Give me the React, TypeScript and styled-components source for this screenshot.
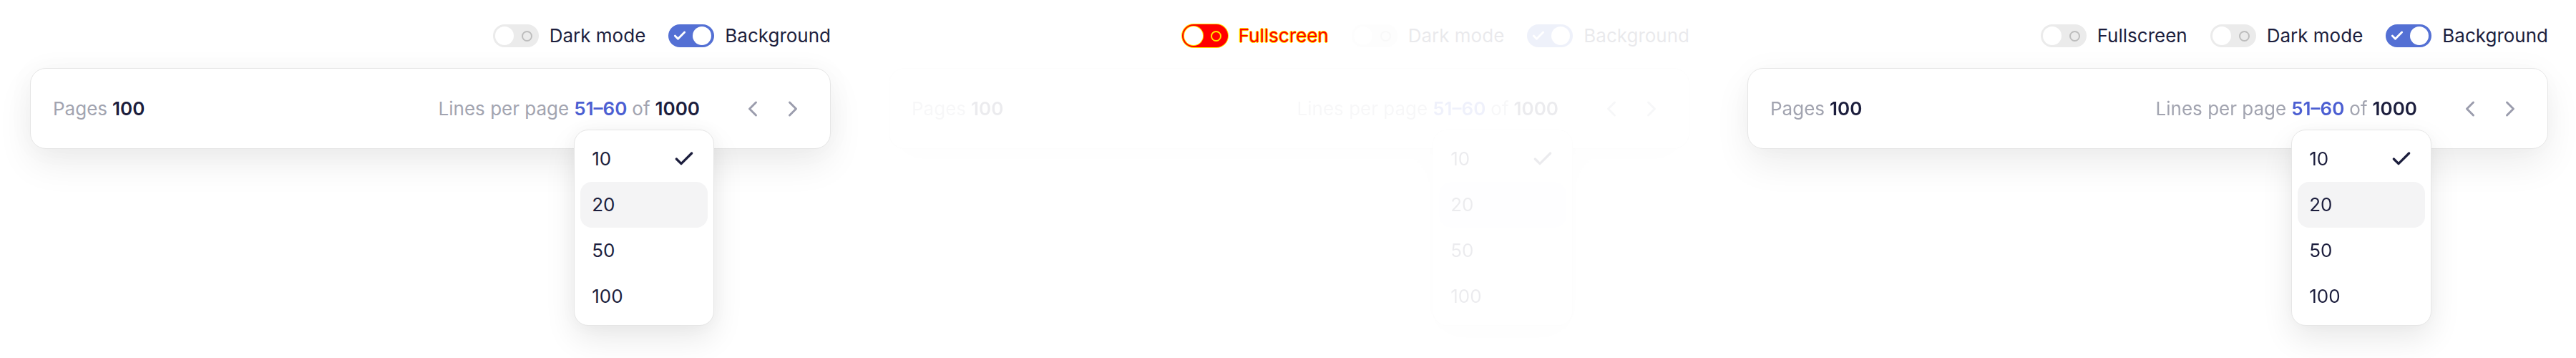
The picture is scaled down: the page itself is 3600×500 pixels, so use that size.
import React from "react";
import styled, { createGlobalStyle, css } from "styled-components";
import { Check, ChevronLeft, ChevronRight } from "lucide-react";

const GlobalStyle = createGlobalStyle`
  html, body { margin: 0; padding: 0; background: #ffffff; }
  body { font-family: Inter, "Noto Sans", sans-serif; -webkit-font-smoothing: antialiased; }
`;

const NAVY = "#1c1e3d";
const GRAY = "#a2a4b0";
const BLUE = "#4c5fd2";

const Row = styled.div`
  display: flex;
  width: 3600px;
  height: 500px;
  overflow: hidden;
`;

const Panel = styled.section`
  width: 1200px;
  flex: 0 0 1200px;
  box-sizing: border-box;
  padding: 34px 39px 0 42px;
  display: flex;
  flex-direction: column;
`;

const dim = css<{ $dim?: boolean }>`
  ${(p) => p.$dim && "opacity: 0.09;"}
`;

const ToggleBar = styled.div`
  display: flex;
  justify-content: flex-end;
  align-items: center;
  gap: 32px;
  height: 32px;
`;

const ToggleItem = styled.label<{ $dim?: boolean }>`
  display: flex;
  align-items: center;
  gap: 15px;
  ${dim}
`;

const Track = styled.span<{ $on?: boolean; $alert?: boolean }>`
  box-sizing: border-box;
  width: 64px;
  height: 32px;
  border-radius: 16px;
  display: flex;
  align-items: center;
  justify-content: space-between;
  padding: 0 4px 0 3px;
  flex-direction: ${(p) => (p.$on ? "row-reverse" : "row")};
  background: ${(p) => (p.$alert ? "#ff0000" : p.$on ? "#5470d4" : "#ebebeb")};
  ${(p) => p.$alert && "box-shadow: 0 0 0 1px #ffe600;"}
`;

const Knob = styled.span<{ $alert?: boolean }>`
  width: 26px;
  height: 26px;
  border-radius: 50%;
  background: #ffffff;
  ${(p) => p.$alert && "box-shadow: 0 0 0 1px #ffe600;"}
`;

const Ring = styled.span<{ $alert?: boolean }>`
  box-sizing: border-box;
  width: 15px;
  height: 15px;
  margin-right: 5px;
  border-radius: 50%;
  border: 2px solid ${(p) => (p.$alert ? "#ffe600" : "#bdbdbd")};
`;

const TickBox = styled.span`
  display: flex;
  margin-left: 3px;
  color: #ffffff;
`;

const ToggleText = styled.span<{ $alert?: boolean }>`
  font-size: 26px;
  line-height: 32px;
  color: ${(p) => (p.$alert ? "#ff0000" : NAVY)};
  ${(p) =>
    p.$alert &&
    "text-shadow: 1px 0 0 #ffe600, -1px 0 0 #ffe600, 0 1px 0 #ffe600, 0 -1px 0 #ffe600;"}
`;

const Card = styled.div<{ $dim?: boolean }>`
  position: relative;
  margin-top: 29px;
  height: 113px;
  box-sizing: border-box;
  border: 1.5px solid #e6e6e6;
  border-radius: 22px;
  background: #ffffff;
  box-shadow: 0 22px 50px rgba(0, 0, 0, 0.07), 0 0 40px rgba(0, 0, 0, 0.03);
  display: flex;
  align-items: center;
  justify-content: space-between;
  padding: 0 34px 0 31px;
  ${dim}
`;

const Stat = styled.div`
  font-size: 26px;
  line-height: 36px;
  color: ${GRAY};
  display: flex;
  align-items: center;
  gap: 7px;
`;

const Strong = styled.b<{ $accent?: boolean }>`
  font-weight: 600;
  color: ${(p) => (p.$accent ? BLUE : NAVY)};
`;

const Trigger = styled.span`
  position: relative;
  display: inline-block;
`;

const Right = styled.div`
  display: flex;
  align-items: center;
`;

const NavButtons = styled.div`
  display: flex;
  align-items: center;
  gap: 20px;
  margin-left: 56px;
`;

const NavButton = styled.button`
  display: flex;
  align-items: center;
  justify-content: center;
  width: 36px;
  height: 36px;
  padding: 0;
  border: none;
  background: transparent;
  color: #9b9dad;
`;

const Menu = styled.ul`
  position: absolute;
  left: 0;
  top: calc(100% + 11px);
  width: 196px;
  box-sizing: border-box;
  margin: 0;
  padding: 8px;
  list-style: none;
  background: #ffffff;
  border: 1.5px solid #e6e6e6;
  border-radius: 20px;
  box-shadow: 0 18px 44px rgba(0, 0, 0, 0.09), 0 0 24px rgba(0, 0, 0, 0.03);
  z-index: 2;
`;

const MenuItem = styled.li<{ $active?: boolean }>`
  height: 64px;
  display: flex;
  align-items: center;
  justify-content: space-between;
  padding: 0 17px 0 16px;
  border-radius: 16px;
  font-size: 26px;
  font-weight: 400;
  color: ${NAVY};
  background: ${(p) => (p.$active ? "#f4f4f5" : "transparent")};
`;

type ToggleProps = { label: string; on?: boolean; alert?: boolean; dimmed?: boolean };

function Toggle({ label, on, alert, dimmed }: ToggleProps) {
  return (
    <ToggleItem $dim={dimmed}>
      <Track $on={on} $alert={alert}>
        <Knob $alert={alert} />
        {on ? (
          <TickBox>
            <Check size={20} strokeWidth={3.4} />
          </TickBox>
        ) : (
          <Ring $alert={alert} />
        )}
      </Track>
      <ToggleText $alert={alert}>{label}</ToggleText>
    </ToggleItem>
  );
}

const sizes = ["10", "20", "50", "100"];

type PanelProps = { fullscreen?: "none" | "alert" | "off"; dimmed?: boolean };

function PaginationPanel({ fullscreen = "none", dimmed }: PanelProps) {
  return (
    <Panel>
      <ToggleBar>
        {fullscreen !== "none" && <Toggle label="Fullscreen" alert={fullscreen === "alert"} />}
        <Toggle label="Dark mode" dimmed={dimmed} />
        <Toggle label="Background" on dimmed={dimmed} />
      </ToggleBar>
      <Card $dim={dimmed}>
        <Stat>
          <span>Pages</span>
          <Strong>100</Strong>
        </Stat>
        <Right>
          <Stat>
            <span>Lines per page</span>
            <Trigger>
              <Strong $accent>51–60</Strong>
              <Menu>
                {sizes.map((s, i) => (
                  <MenuItem key={s} $active={i === 1}>
                    {s}
                    {i === 0 && <Check size={32} strokeWidth={2.5} color={NAVY} />}
                  </MenuItem>
                ))}
              </Menu>
            </Trigger>
            <span>of</span>
            <Strong>1000</Strong>
          </Stat>
          <NavButtons>
            <NavButton aria-label="Previous">
              <ChevronLeft size={36} strokeWidth={2} />
            </NavButton>
            <NavButton aria-label="Next">
              <ChevronRight size={36} strokeWidth={2} />
            </NavButton>
          </NavButtons>
        </Right>
      </Card>
    </Panel>
  );
}

export default function App() {
  return (
    <>
      <GlobalStyle />
      <Row>
        <PaginationPanel />
        <PaginationPanel fullscreen="alert" dimmed />
        <PaginationPanel fullscreen="off" />
      </Row>
    </>
  );
}
